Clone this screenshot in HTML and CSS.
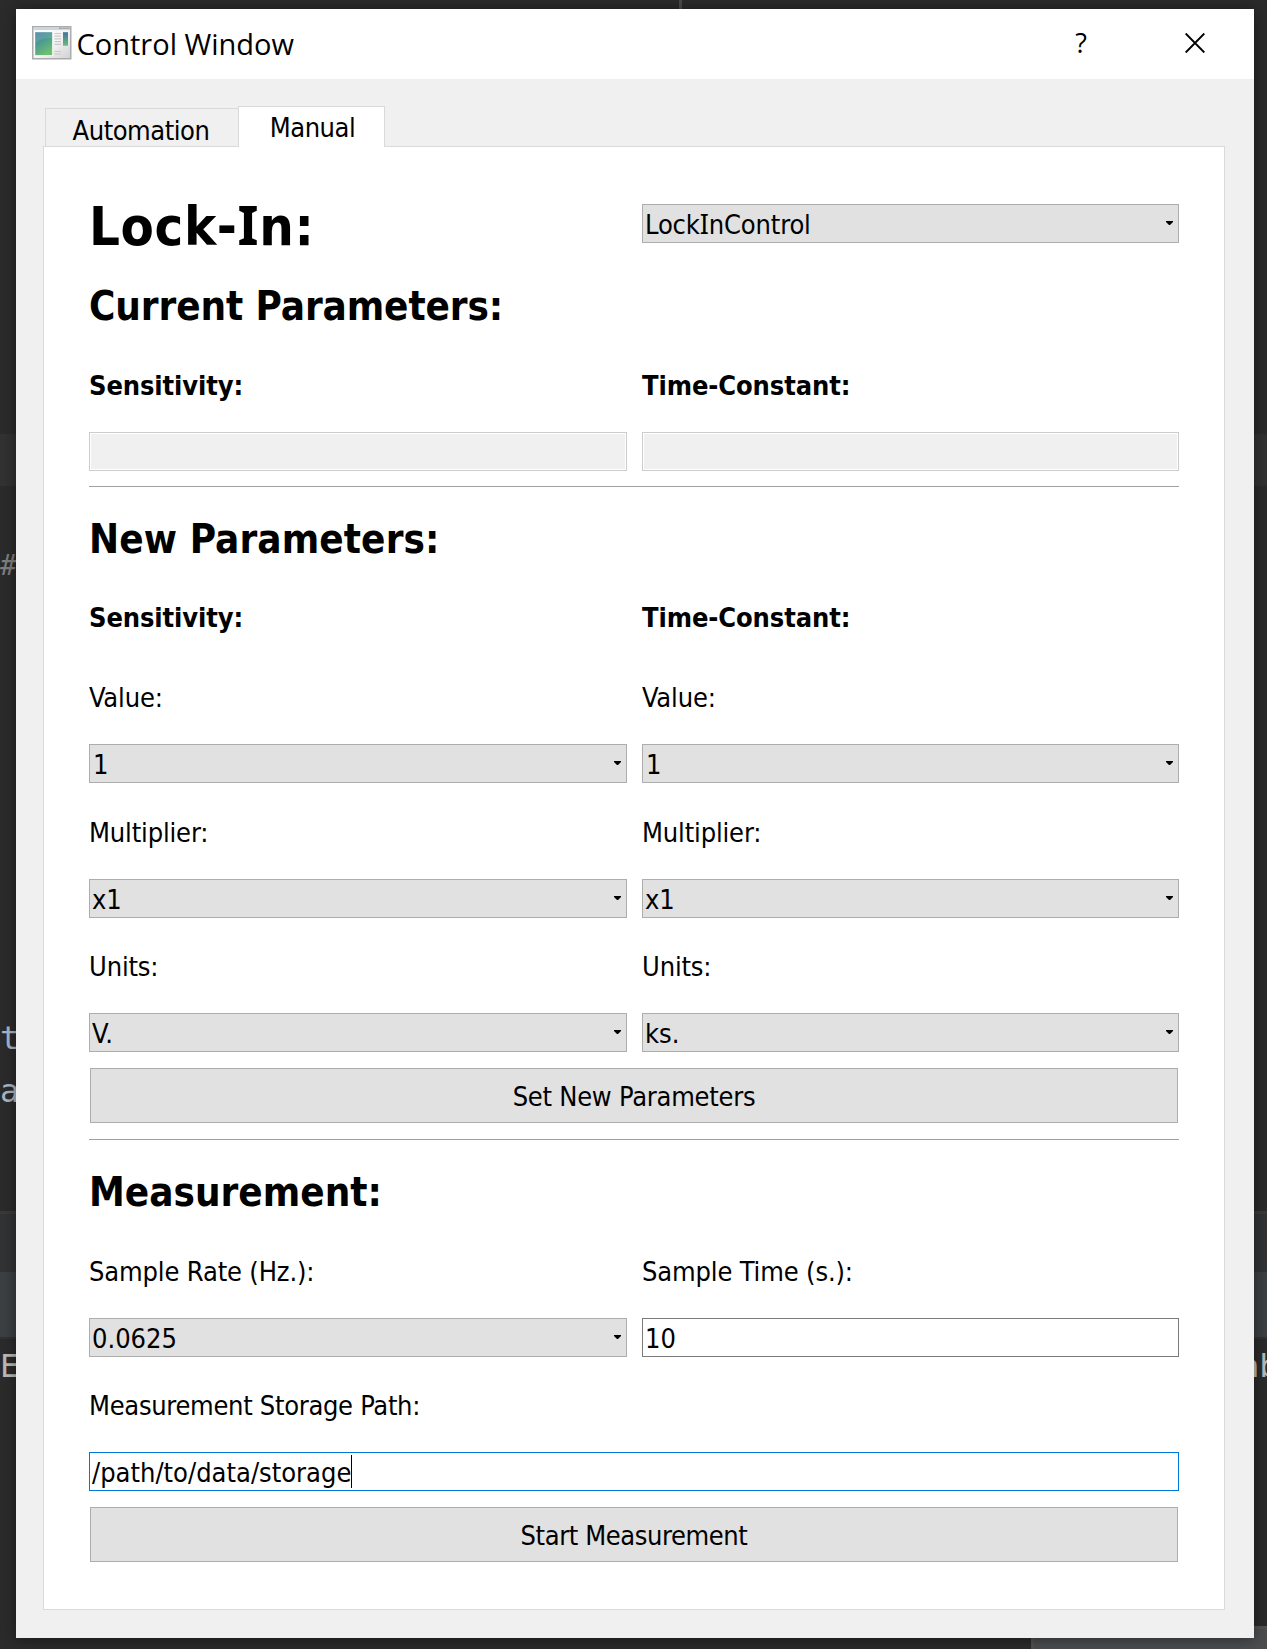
FILE: index.html
```
<!DOCTYPE html>
<html lang="en">
<head>
<meta charset="utf-8">
<title>Control Window</title>
<link rel="stylesheet" href="styles.css">
</head>
<body>
<div class="editor" aria-hidden="true">
  <div class="band band-line"></div>
  <div class="band band-header"></div>
  <div class="band band-toolbar"></div>
  <div class="band band-edge"></div>
  <div class="divider"></div>
  <div class="status"></div>
  <span class="code code-comment">#</span>
  <span class="code code-t">t</span>
  <span class="code code-a">a</span>
  <span class="code code-e">E</span>
  <span class="code code-b">ab</span>
</div>

<main class="window">
  <header class="titlebar">
    <svg class="app-icon" width="40" height="34" viewBox="0 0 40 34">
      <defs>
        <linearGradient id="frame" x1="0" y1="0" x2="1" y2="1"><stop offset="0" stop-color="#fbfbfb"/><stop offset=".55" stop-color="#f4f4f4"/><stop offset="1" stop-color="#cfcfcf"/></linearGradient>
        <linearGradient id="pane" x1="0" y1="0" x2=".5" y2="1"><stop offset="0" stop-color="#4c80a4"/><stop offset=".5" stop-color="#4d9c91"/><stop offset="1" stop-color="#6dbd72"/></linearGradient>
        <linearGradient id="strip" x1="0" y1="0" x2="0" y2="1"><stop offset="0" stop-color="#44739f"/><stop offset="1" stop-color="#69bb78"/></linearGradient>
      </defs>
      <rect x=".75" y=".75" width="38" height="32" fill="url(#frame)" stroke="#a9abae" stroke-width="1.5"/>
      <rect x="1.5" y="1.5" width="36.5" height="2.5" fill="#cdd5df"/>
      <path d="M27 2.2h10.500" stroke="#a4a7ab" stroke-width="1.400" stroke-dasharray="3 .6"/>
      <rect x="2.600" y="5.500" width="18.500" height="24.500" fill="#fff"/>
      <rect x="3.200" y="6.200" width="17" height="23" fill="url(#pane)"/>
      <path d="M3.200 17C8 12.500 14 11.500 20.200 12V6.200h-17z" fill="#fff" opacity=".1"/>
      <path d="M22.500 7.500h6.500M22.500 10.200h6.500M22.500 12.900h6.500M22.500 15.600h6.500M22.500 18.300h6.500M22.500 25.500h6.500M22.500 28h6.500" stroke="#c9c9c9" stroke-width="1.200"/>
      <rect x="31" y="6.200" width="5" height="13.500" fill="url(#strip)"/>
    </svg>
    <h1 class="title">Control Window</h1>
    <span class="help">?</span>
    <svg class="close" width="20" height="20" viewBox="0 0 20 20"><path d="M.7.500l18.600 19M19.300.500L.7 19.500" stroke="#000" stroke-width="1.900" fill="none"/></svg>
  </header>

  <nav class="tabs">
    <div class="tab">Automation</div>
    <div class="tab active">Manual</div>
  </nav>

  <section class="panel">
    <h2 class="heading-main"><span>Lock-<span class="cap-i">I</span>n:</span></h2>
    <div class="combo"><span class="device">Lock<span class="cap-i">I</span>nControl</span><svg class="arrow" viewBox="0 0 7 4"><path d="M0 0h7v1L4 4H3L0 1z"/></svg></div>

    <h3 class="heading wide">Current Parameters:</h3>
    <div class="label strong">Sensitivity:</div>
    <div class="label strong">Time-Constant:</div>
    <div class="field disabled"></div>
    <div class="field disabled"></div>
    <div class="rule wide"></div>

    <h3 class="heading wide new">New Parameters:</h3>
    <div class="label strong raised">Sensitivity:</div>
    <div class="label strong raised">Time-Constant:</div>
    <div class="label">Value:</div>
    <div class="label">Value:</div>
    <div class="combo digit">1<svg class="arrow" viewBox="0 0 7 4"><path d="M0 0h7v1L4 4H3L0 1z"/></svg></div>
    <div class="combo digit">1<svg class="arrow" viewBox="0 0 7 4"><path d="M0 0h7v1L4 4H3L0 1z"/></svg></div>
    <div class="label">Multiplier:</div>
    <div class="label">Multiplier:</div>
    <div class="combo">x1<svg class="arrow" viewBox="0 0 7 4"><path d="M0 0h7v1L4 4H3L0 1z"/></svg></div>
    <div class="combo">x1<svg class="arrow" viewBox="0 0 7 4"><path d="M0 0h7v1L4 4H3L0 1z"/></svg></div>
    <div class="label raised">Units:</div>
    <div class="label raised">Units:</div>
    <div class="combo">V.<svg class="arrow" viewBox="0 0 7 4"><path d="M0 0h7v1L4 4H3L0 1z"/></svg></div>
    <div class="combo">ks.<svg class="arrow" viewBox="0 0 7 4"><path d="M0 0h7v1L4 4H3L0 1z"/></svg></div>
    <div class="button wide">Set New Parameters</div>
    <div class="rule wide"></div>

    <h3 class="heading wide measure">Measurement:</h3>
    <div class="label">Sample Rate (Hz.):</div>
    <div class="label">Sample Time (s.):</div>
    <div class="combo">0.0625<svg class="arrow" viewBox="0 0 7 4"><path d="M0 0h7v1L4 4H3L0 1z"/></svg></div>
    <div class="field">10</div>
    <div class="label wide raised path">Measurement Storage Path:</div>
    <div class="field focused wide">/path/to/data/storage<span class="caret"></span></div>
    <div class="button wide start">Start Measurement</div>
  </section>
</main>
</body>
</html>
```
FILE: styles.css
```
* { box-sizing: border-box; }

body {
  margin: 0;
  width: 1267px;
  height: 1649px;
  padding: 9px 13px 11px 16px;
  position: relative;
  overflow: hidden;
  background: #2b2b2b;
  color: #000;
  font-family: "DejaVu Sans Condensed", "DejaVu Sans", sans-serif;
  font-size: 27px;
}

h1, h2, h3 { margin: 0; }

/* Code editor behind the dialog */
.editor { position: absolute; inset: 0; overflow: hidden; }
.band { position: absolute; left: 0; right: 0; }
.band-line { top: 434px; height: 52px; background: #323232; }
.band-header { top: 1211px; height: 61px; background: #313335; border-top: 3px solid #3a3a3b; }
.band-toolbar { top: 1272px; height: 65px; background: #3c4043; }
.band-edge { top: 1337px; height: 2px; background: #323232; }
.divider { position: absolute; left: 679px; top: 0; width: 3px; height: 9px; background: #4b4b4b; }
.status { position: absolute; left: 1031px; right: 0; top: 1626px; bottom: 0; background: #4b4d4f; border: solid #515253; border-width: 3px 0 0 3px; }
.code { position: absolute; left: 0; font: 32px/40px "DejaVu Sans Mono", monospace; color: #a9b7c6; white-space: pre; }
.code-comment { top: 546px; color: #808080; font-style: italic; font-size: 28px; }
.code-t { top: 1018px; }
.code-a { top: 1071px; }
.code-e { top: 1346px; color: #bbb; }
.code-b { left: 1240px; top: 1346px; color: #bbb; }

/* Dialog */
.window {
  position: relative;
  width: 1238px;
  height: 1629px;
  display: flex;
  flex-direction: column;
  background: #f0f0f0;
  box-shadow: 0 1px 14px rgba(0, 0, 0, .45);
}

.titlebar {
  height: 70px;
  flex: none;
  display: flex;
  align-items: center;
  padding: 0 49px 0 16px;
  background: #fff;
}
.app-icon { margin-top: -3px; }
.title { margin-left: 4.500px; flex: 1; font: 29px/40px "Open Sans", "Noto Sans", sans-serif; }
.help { width: 14px; margin: -3px 97px 0 0; font: 500 27px/40px "Open Sans", sans-serif; text-align: center; }
.close { margin-top: -3px; }

.tabs {
  height: 67px;
  flex: none;
  display: flex;
  align-items: flex-end;
  padding-left: 29px;
  letter-spacing: -.45px;
}
.tab {
  width: 193px;
  height: 38px;
  display: flex;
  align-items: center;
  justify-content: center;
  padding: 6px 2px 0 0;
  border: 1px solid #d9d9d9;
  border-width: 1px 0 0 1px;
}
.tab.active {
  position: relative;
  width: 147px;
  height: 41px;
  margin-bottom: -1px;
  padding: 1px 0 0 2px;
  border-width: 1px 1px 0;
  background: #fff;
}

.panel {
  width: 1182px;
  height: 1464px;
  margin-left: 27px;
  padding: 41px 45px 0;
  display: grid;
  grid-template-columns: 538px 537px;
  grid-template-rows: 71px 62px 66px 39px 3px 67px 62px 66px 39px 66px 39px 65px 39px 57px 3px 65px 66px 39px 65px 39px 57px;
  gap: 15px;
  border: 1px solid #dadada;
  background: #fff;
}
.wide { grid-column: 1 / -1; }
.cap-i { font-family: "Noto Sans", sans-serif; line-height: 0; }

.heading-main, .heading, .label {
  display: flex;
  align-items: center;
  white-space: pre;
}
.heading-main { padding-top: 5px; font-size: 54px; letter-spacing: .6px; }
.heading { padding-top: 2px; font-size: 40px; letter-spacing: -.1px; }
.heading.new { padding-top: 3px; letter-spacing: .1px; }
.heading.measure { padding-top: 5px; letter-spacing: 0; }
.label { padding-top: 3px; letter-spacing: -.15px; }
.label.strong { font-weight: bold; letter-spacing: -.1px; }
.label.raised { padding-top: 1px; }
.label.path { letter-spacing: -.3px; }

.combo, .field {
  height: 39px;
  align-self: center;
  display: flex;
  align-items: center;
  padding: 2px 5px 0 2px;
  border: 1px solid #adadad;
  background: #e1e1e1;
}
.combo.digit { padding-left: 3px; }
.device { letter-spacing: -.15px; }
.arrow { width: 7px; height: 4px; margin: -3px 0 0 auto; }
.field { background: #fff; border-color: #7a7a7a; }
.field.disabled { background: #f0f0f0; border-color: #ccc; box-shadow: inset 0 0 0 1px #fff; }
.field.focused { border-color: #0078d7; }
.caret { width: 1px; height: 33px; margin-top: -2px; background: #000; }

.rule { height: 1px; background: #a0a0a0; }
.button {
  margin: 1px;
  display: flex;
  align-items: center;
  justify-content: center;
  padding-top: 2px;
  border: 1px solid #adadad;
  background: #e1e1e1;
  letter-spacing: -.25px;
}
.button.start { letter-spacing: -.4px; }
```
